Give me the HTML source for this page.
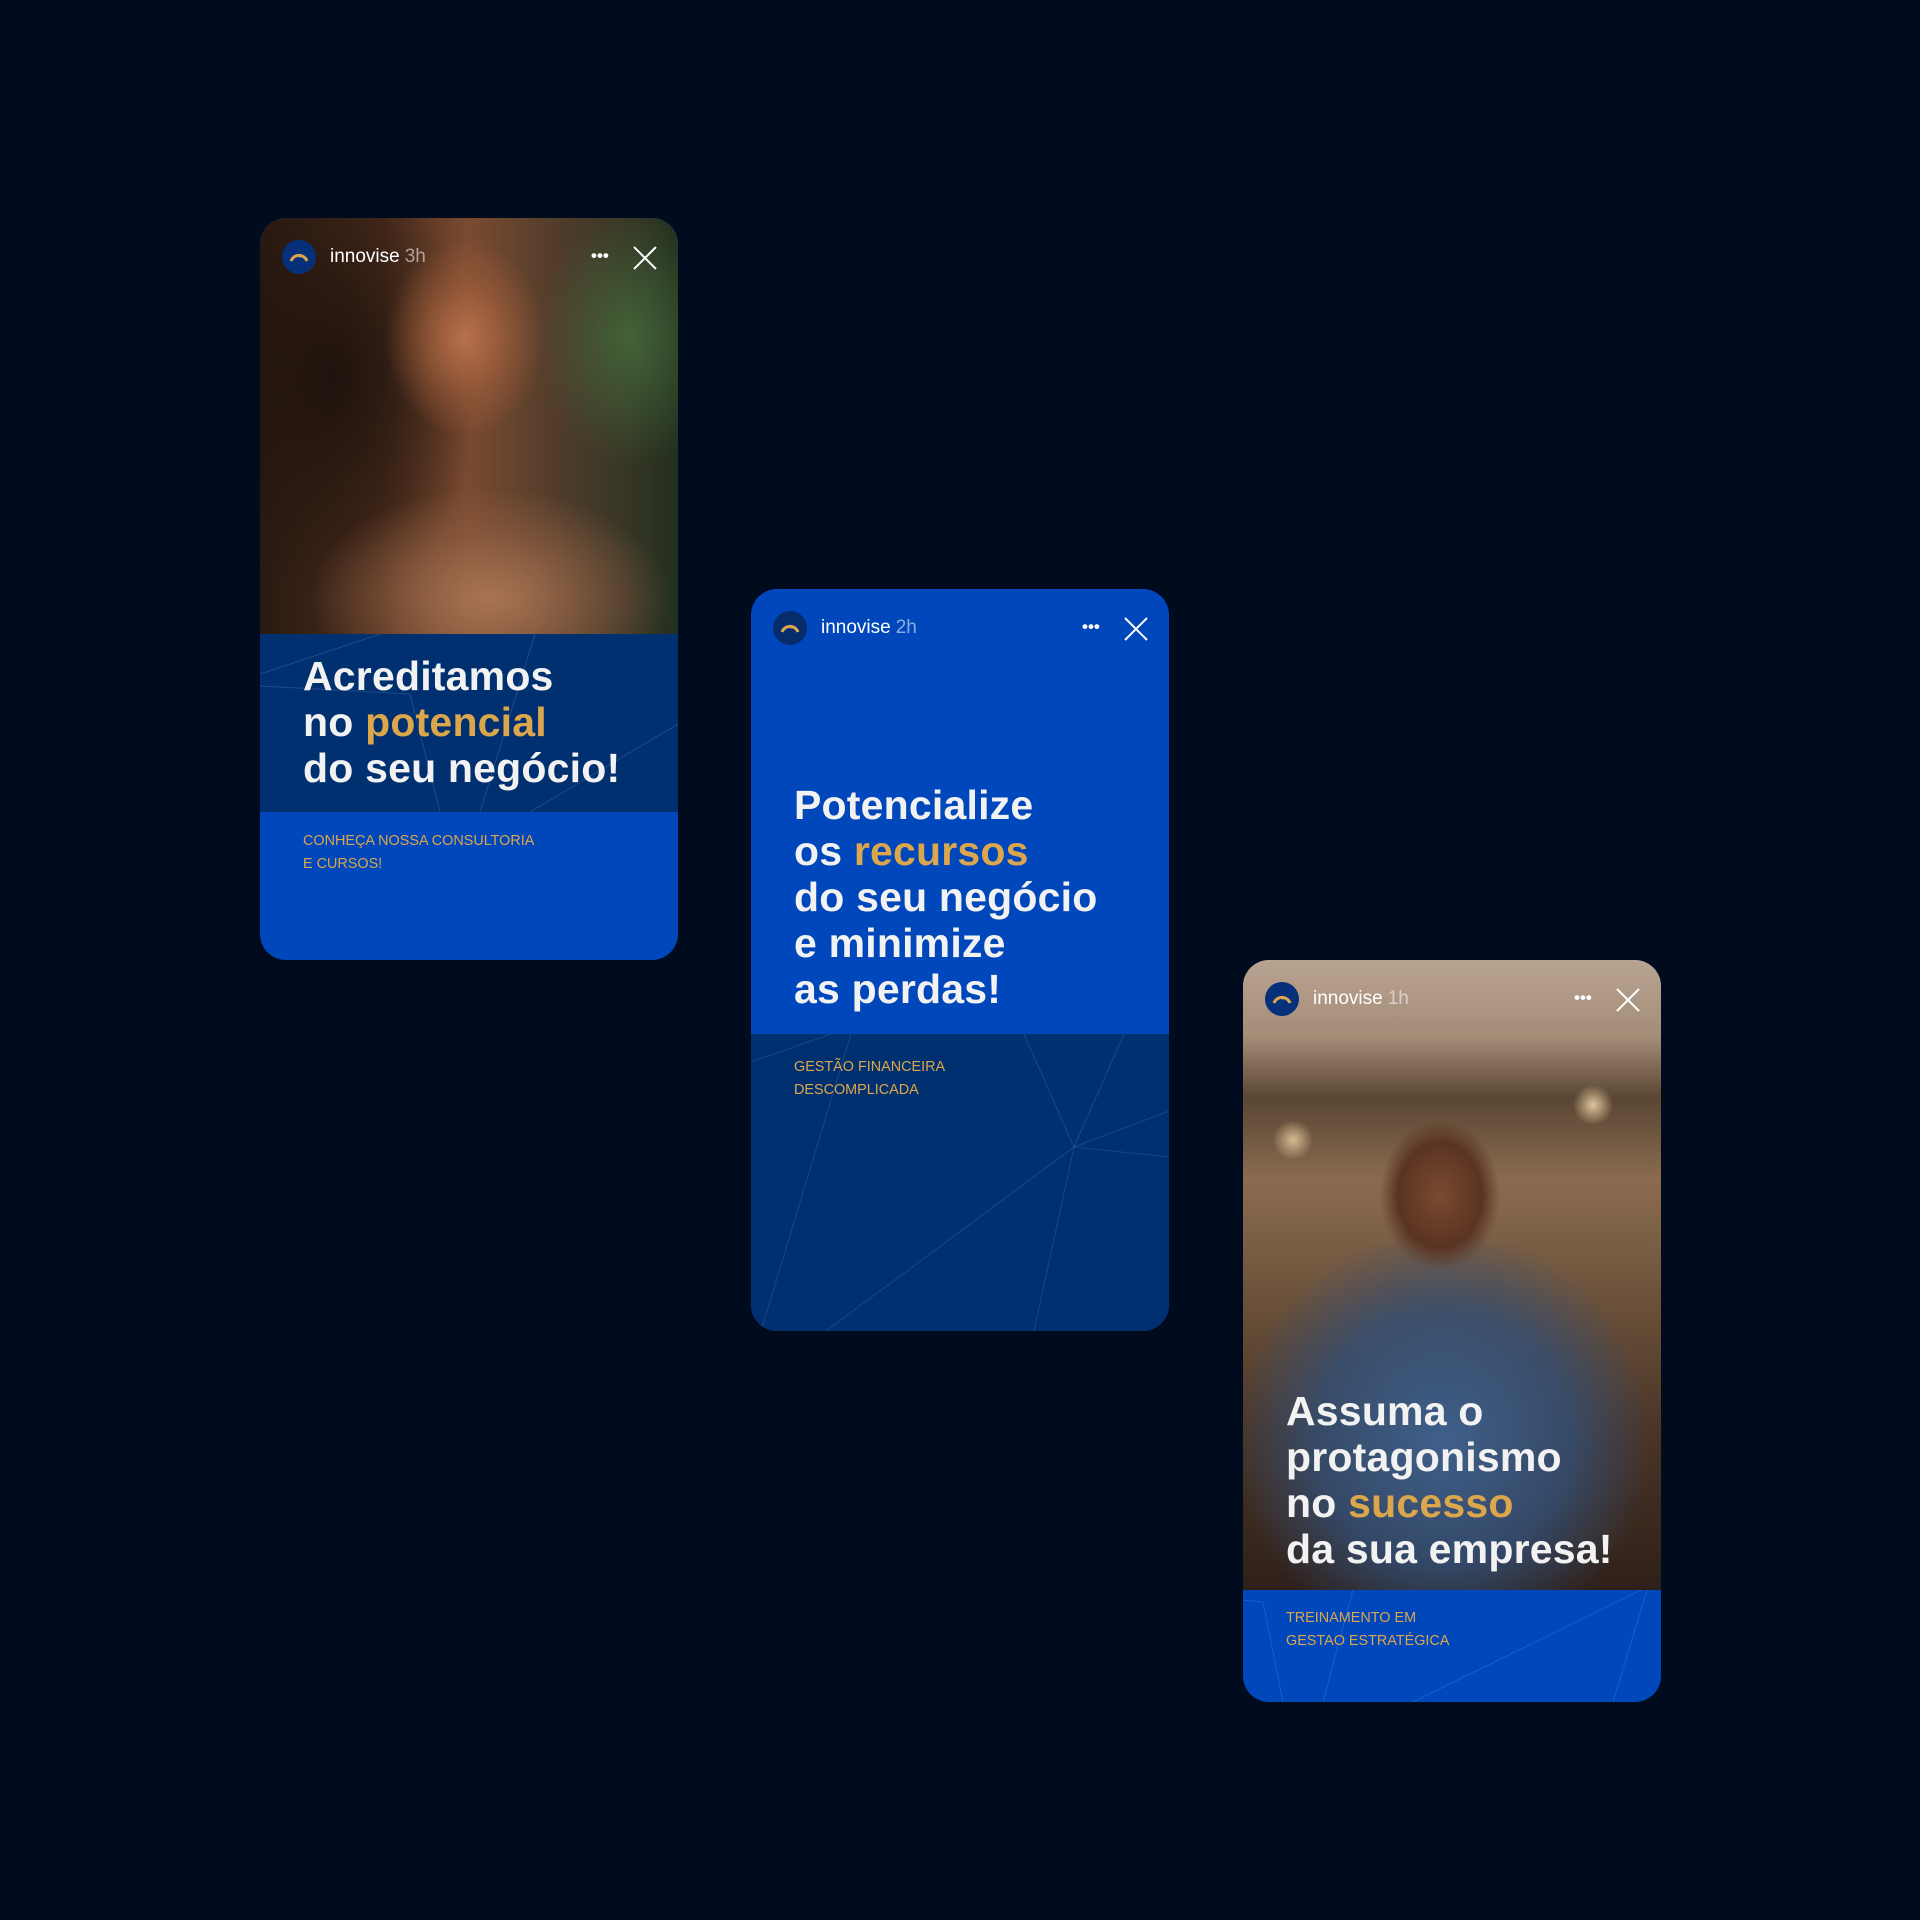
<!DOCTYPE html>
<html><head><meta charset="utf-8"><style>
*{margin:0;padding:0;box-sizing:border-box}
body{width:1920px;height:1920px;background:#000c1e;position:relative;overflow:hidden;font-family:"Liberation Sans",sans-serif}
.card{position:absolute;width:418px;height:742px;border-radius:26px;overflow:hidden}
.hdr{position:absolute;left:0;top:0;width:100%;height:80px}
.av{position:absolute;left:22px;top:22px;width:34px;height:34px;border-radius:50%;background:#06307a}
.name{position:absolute;left:70px;top:28px;color:#fff;font-size:19px}
.name span{color:rgba(255,255,255,.55);margin-left:5px}
.dots{position:absolute;left:331px;top:28px;color:#fff;font-size:17px;letter-spacing:0px;font-weight:bold}
.x{position:absolute;left:372px;top:27px}
.h{position:absolute;left:43px;color:#f2f2f2;font-weight:bold;font-size:41px;line-height:46px;letter-spacing:0.2px}
.g{color:#dca64c}
.s{position:absolute;left:43px;color:#dca64c;font-size:14.4px;line-height:23px}
</style></head><body>

<!-- Card 1 -->
<div class="card" style="left:260px;top:218px;background:#0047bb">
  <div style="position:absolute;left:0;top:0;width:418px;height:416px;background:linear-gradient(90deg,#2a1a12 0%,#4a2c1c 30%,#7a4a30 50%,#4a3a2a 75%,#23301f 100%)"></div>
  <div style="position:absolute;left:0;top:0;width:418px;height:416px;background:radial-gradient(ellipse 80px 100px at 205px 120px,#b8704a 0%,rgba(160,95,60,.6) 55%,rgba(0,0,0,0) 100%),radial-gradient(ellipse 180px 110px at 230px 380px,#a87452 0%,rgba(150,100,70,.5) 60%,rgba(0,0,0,0) 100%),radial-gradient(ellipse 90px 130px at 370px 120px,rgba(70,110,60,.8),rgba(0,0,0,0)),radial-gradient(ellipse 150px 220px at 70px 160px,#1f130d,rgba(0,0,0,0))"></div>
  <div style="position:absolute;left:0;top:416px;width:418px;height:178px;background:#00306f"></div>
  <svg style="position:absolute;left:0;top:416px" width="418" height="178"><g stroke="rgba(120,150,220,.25)" fill="none"><path d="M0 40 L120 0"/><path d="M0 52 L150 60 L180 178"/><path d="M275 0 L220 178"/><path d="M418 90 L270 178"/></g></svg>
  <div class="hdr"><div class="av"></div><svg style="position:absolute;left:22px;top:22px" width="34" height="34"><path d="M9 21 A8.5 8.5 0 0 1 25 21" stroke="#dca64c" stroke-width="3" fill="none"/><path d="M17 17 L20 14 L18 18Z" fill="#dca64c"/></svg>
  <div class="name">innovise<span>3h</span></div><div class="dots">•••</div>
  <svg class="x" width="26" height="26"><path d="M2 2L24 24M24 2L2 24" stroke="#fff" stroke-width="2"/></svg></div>
  <div class="h" style="top:435px">Acreditamos<br>no <span class="g">potencial</span><br>do seu negócio!</div>
  <div class="s" style="top:612px">CONHEÇA NOSSA CONSULTORIA<br>E CURSOS!</div>
</div>

<!-- Card 2 -->
<div class="card" style="left:751px;top:589px;background:#0047bb">
  <div style="position:absolute;left:0;top:445px;width:418px;height:297px;background:#00306f"></div>
  <svg style="position:absolute;left:0;top:445px" width="418" height="297"><g stroke="rgba(120,150,220,.22)" fill="none"><path d="M0 28 L80 0"/><path d="M100 0 L10 297"/><path d="M273 0 L323 113 L283 297"/><path d="M373 0 L323 113 L418 123"/><path d="M418 77 L323 113 L75 297"/></g></svg>
  <div class="hdr"><div class="av" style="background:#062c6e"></div><svg style="position:absolute;left:22px;top:22px" width="34" height="34"><path d="M9 21 A8.5 8.5 0 0 1 25 21" stroke="#dca64c" stroke-width="3" fill="none"/><path d="M17 17 L20 14 L18 18Z" fill="#dca64c"/></svg>
  <div class="name">innovise<span>2h</span></div><div class="dots">•••</div>
  <svg class="x" width="26" height="26"><path d="M2 2L24 24M24 2L2 24" stroke="#fff" stroke-width="2"/></svg></div>
  <div class="h" style="top:193px">Potencialize<br>os <span class="g">recursos</span><br>do seu negócio<br>e minimize<br>as perdas!</div>
  <div class="s" style="top:467px">GESTÃO FINANCEIRA<br>DESCOMPLICADA</div>
</div>

<!-- Card 3 -->
<div class="card" style="left:1243px;top:960px;background:#0047bb">
  <div style="position:absolute;left:0;top:0;width:418px;height:630px;background:linear-gradient(180deg,#b8a391 0%,#a58d78 12%,#5a4634 22%,#8a6c50 35%,#6a5039 55%,#4a3426 75%,#2e2019 100%)"></div>
  <div style="position:absolute;left:0;top:0;width:418px;height:630px;background:radial-gradient(ellipse 60px 75px at 197px 235px,#7a4a30 0%,#5a3422 70%,rgba(0,0,0,0) 100%),radial-gradient(ellipse 210px 210px at 200px 480px,#3f5f8a 0%,rgba(50,80,120,.8) 60%,rgba(0,0,0,0) 100%),radial-gradient(circle 20px at 350px 145px,rgba(255,230,180,.8),rgba(0,0,0,0)),radial-gradient(circle 20px at 50px 180px,rgba(255,230,180,.7),rgba(0,0,0,0))"></div>
  <svg style="position:absolute;left:0;top:630px" width="418" height="112"><g stroke="rgba(120,150,220,.25)" fill="none"><path d="M0 10 L20 12 L40 112"/><path d="M110 0 L80 112"/><path d="M398 0 L170 112"/><path d="M404 0 L370 112"/></g></svg>
  <div class="hdr"><div class="av"></div><svg style="position:absolute;left:22px;top:22px" width="34" height="34"><path d="M9 21 A8.5 8.5 0 0 1 25 21" stroke="#dca64c" stroke-width="3" fill="none"/><path d="M17 17 L20 14 L18 18Z" fill="#dca64c"/></svg>
  <div class="name">innovise<span>1h</span></div><div class="dots">•••</div>
  <svg class="x" width="26" height="26"><path d="M2 2L24 24M24 2L2 24" stroke="#fff" stroke-width="2"/></svg></div>
  <div class="h" style="top:428px">Assuma o<br>protagonismo<br>no <span class="g">sucesso</span><br>da sua empresa!</div>
  <div class="s" style="top:647px">TREINAMENTO EM<br>GESTAO ESTRATÉGICA</div>
</div>
</body></html>
